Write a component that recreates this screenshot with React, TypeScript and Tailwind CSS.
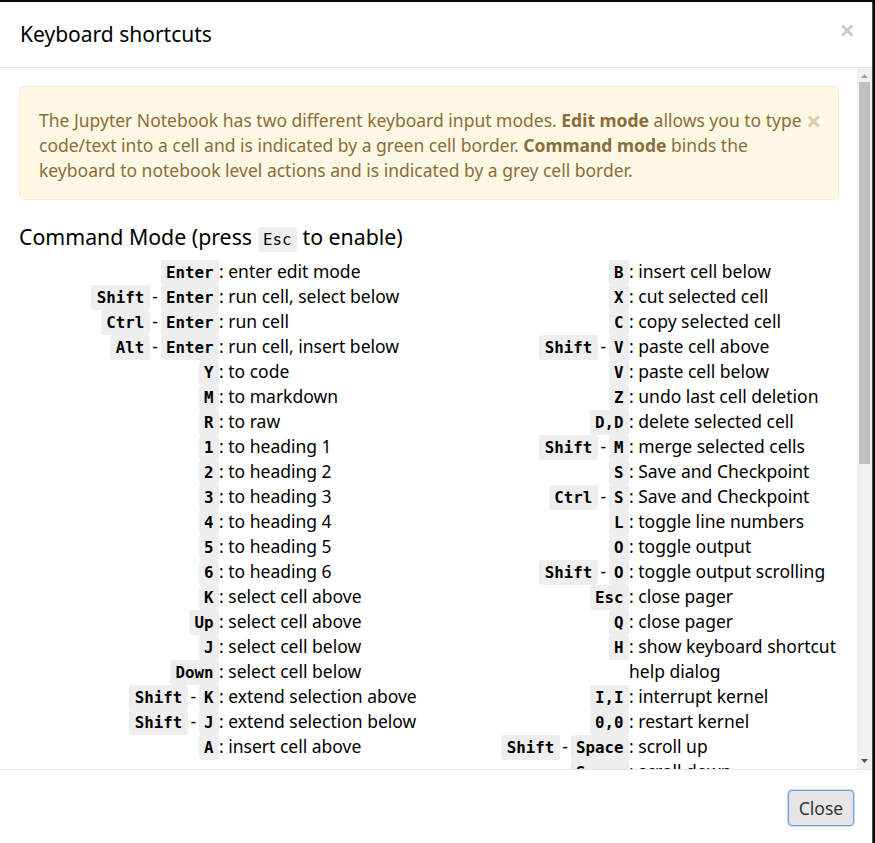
import React from 'react';

const LEFT: [string[], string][] = [
  [['Enter'], 'enter edit mode'],
  [['Shift', 'Enter'], 'run cell, select below'],
  [['Ctrl', 'Enter'], 'run cell'],
  [['Alt', 'Enter'], 'run cell, insert below'],
  [['Y'], 'to code'],
  [['M'], 'to markdown'],
  [['R'], 'to raw'],
  [['1'], 'to heading 1'],
  [['2'], 'to heading 2'],
  [['3'], 'to heading 3'],
  [['4'], 'to heading 4'],
  [['5'], 'to heading 5'],
  [['6'], 'to heading 6'],
  [['K'], 'select cell above'],
  [['Up'], 'select cell above'],
  [['J'], 'select cell below'],
  [['Down'], 'select cell below'],
  [['Shift', 'K'], 'extend selection above'],
  [['Shift', 'J'], 'extend selection below'],
  [['A'], 'insert cell above'],
];

const RIGHT: [string[], string][] = [
  [['B'], 'insert cell below'],
  [['X'], 'cut selected cell'],
  [['C'], 'copy selected cell'],
  [['Shift', 'V'], 'paste cell above'],
  [['V'], 'paste cell below'],
  [['Z'], 'undo last cell deletion'],
  [['D,D'], 'delete selected cell'],
  [['Shift', 'M'], 'merge selected cells'],
  [['S'], 'Save and Checkpoint'],
  [['Ctrl', 'S'], 'Save and Checkpoint'],
  [['L'], 'toggle line numbers'],
  [['O'], 'toggle output'],
  [['Shift', 'O'], 'toggle output scrolling'],
  [['Esc'], 'close pager'],
  [['Q'], 'close pager'],
  [['H'], 'show keyboard shortcut help dialog'],
  [['I,I'], 'interrupt kernel'],
  [['0,0'], 'restart kernel'],
  [['Shift', 'Space'], 'scroll up'],
  [['Space'], 'scroll down'],
];

function Key({ k, bold = true }: { k: string; bold?: boolean }) {
  return (
    <kbd
      className={`rounded-[3px] bg-[#eeeeee] px-[5.4px] py-[3px] font-['DejaVu_Sans_Mono',monospace] text-[15.8px] leading-none text-black ${
        bold ? 'font-bold' : 'font-normal'
      }`}
    >
      {k}
    </kbd>
  );
}

function Shortcut({ keys, desc }: { keys: string[]; desc: string }) {
  return (
    <div className="flex leading-[25px]">
      <div className="w-[200px] shrink-0 text-right whitespace-nowrap">
        {keys.map((k, i) => (
          <React.Fragment key={i}>
            {i > 0 && <span className="mx-[2.7px]">-</span>}
            <Key k={k} />
          </React.Fragment>
        ))}
      </div>
      <div className="flex-1">: {desc}</div>
    </div>
  );
}

export default function App() {
  return (
    <div className="h-[843px] w-[875px] overflow-hidden bg-[#0b0b0b] font-['Noto_Sans',sans-serif] text-black">
      <div className="mt-[2px] w-[873px] border-r border-[#4a4a4a] bg-white">
        {/* header */}
        <div className="flex h-[66px] items-center justify-between border-b border-[#e5e5e5] pl-[20px] pr-[17px]">
          <h4 className="-mt-[2px] text-[21px] leading-[24px] text-black">Keyboard shortcuts</h4>
          <span className="-mt-[10px] text-[27px] leading-none font-bold text-[#cccccc]">×</span>
        </div>

        {/* body */}
        <div className="flex h-[701px]">
          <div className="h-full w-[857px] overflow-hidden pt-[18px] pl-[19px] pr-[18px]">
            <div className="flex rounded-[5px] border border-[#faebcc] bg-[#fcf8e3] pt-[21px] pb-[16px] pl-[19px] pr-[20px] text-[17.5px] leading-[25px] text-[#8a6d3b]">
              <div className="w-[767px] shrink-0">
                The Jupyter Notebook has two different keyboard input modes. <b>Edit mode</b> allows you
                to type code/text into a cell and is indicated by a green cell border.{' '}
                <b>Command mode</b> binds the keyboard to notebook level actions and is indicated by a grey
                cell border.
              </div>
              <span className="ml-auto text-[27px] leading-[25px] font-bold text-[#8a6d3b] opacity-30">×</span>
            </div>

            <h4 className="mt-[25px] text-[21.3px] leading-[24px] text-black">
              Command Mode (press <Key k="Esc" bold={false} /> to enable)
            </h4>

            <div className="mt-[10px] grid grid-cols-2 text-[17.5px]">
              <div>
                {LEFT.map(([k, d], i) => (
                  <Shortcut key={i} keys={k} desc={d} />
                ))}
              </div>
              <div>
                {RIGHT.map(([k, d], i) => (
                  <Shortcut key={i} keys={k} desc={d} />
                ))}
              </div>
            </div>
          </div>

          {/* scrollbar */}
          <div className="flex h-full w-[15px] flex-col items-center bg-[#f1f1f1]">
            <svg width="15" height="14" viewBox="0 0 15 14" className="shrink-0">
              <path d="M4 10 L7.5 6 L11 10 Z" fill="#a3a3a3" />
            </svg>
            <div className="h-[382px] w-[11px] bg-[#c1c1c1]" />
            <div className="flex-1" />
            <svg width="15" height="14" viewBox="0 0 15 14" className="shrink-0">
              <path d="M4 4 L7.5 8 L11 4 Z" fill="#505050" />
            </svg>
          </div>
        </div>

        {/* footer */}
        <div className="flex h-[80px] justify-end border-t border-[#e5e5e5] pt-[20px] pr-[18px]">
          <button className="h-[36px] w-[66px] rounded-[4px] border border-[#6d9be0] bg-[#e6e6e6] text-[17.5px] text-[#333] shadow-[0_0_0_1px_rgba(102,153,224,0.35)]">
            Close
          </button>
        </div>
      </div>
    </div>
  );
}
